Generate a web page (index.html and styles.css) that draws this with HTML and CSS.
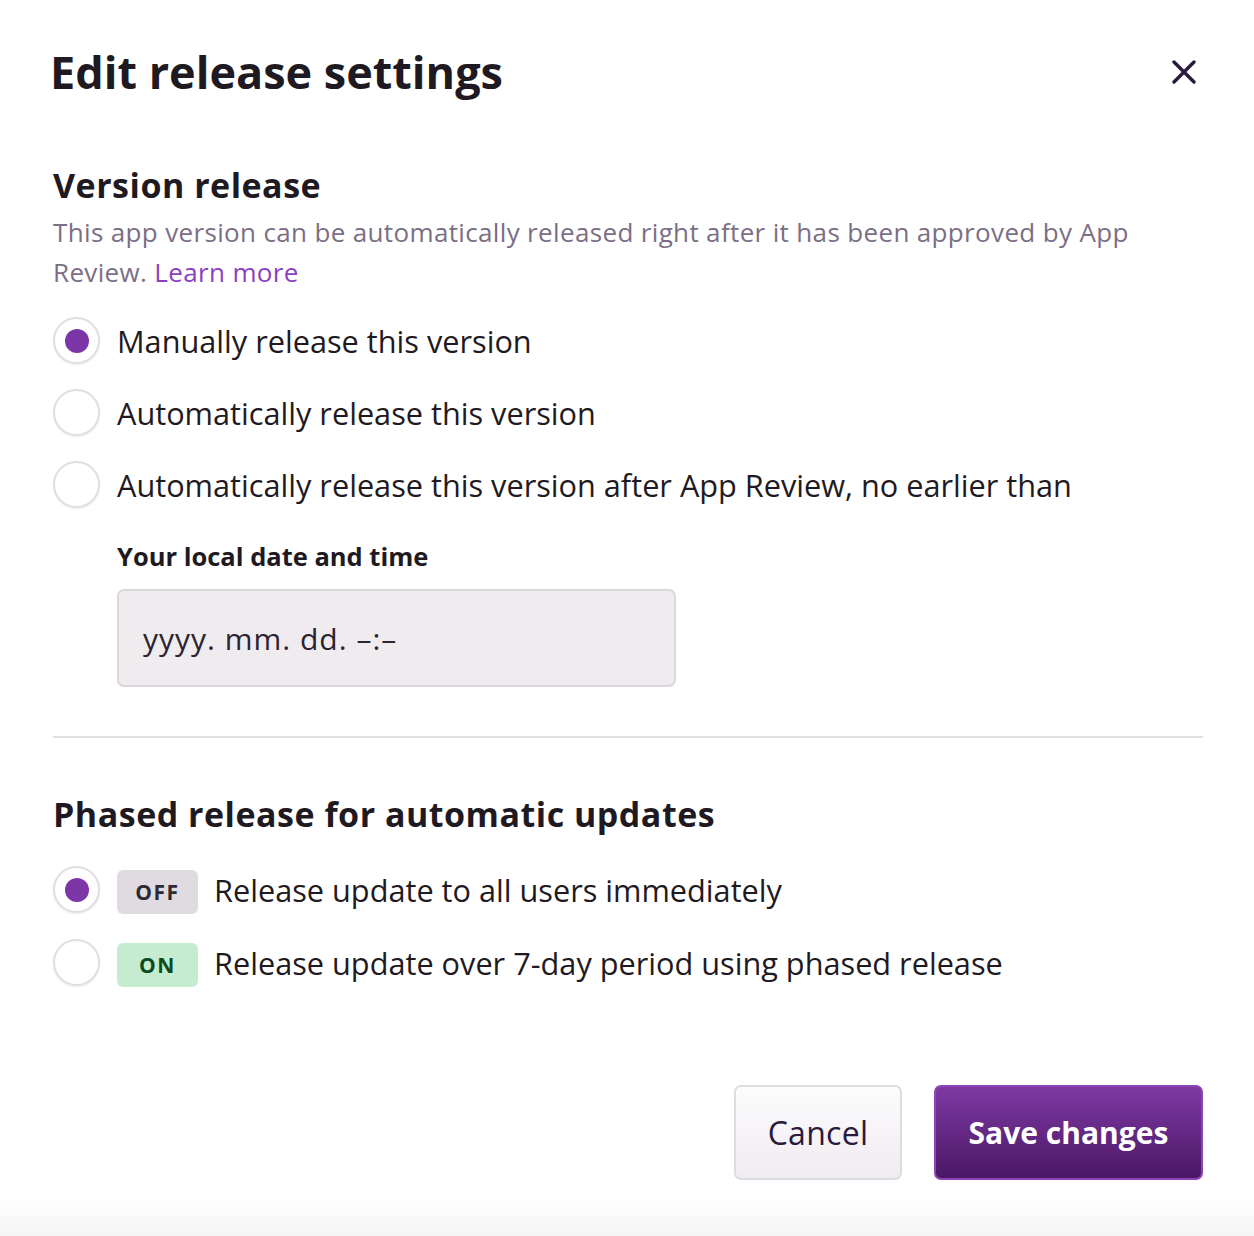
FILE: index.html
```html
<!DOCTYPE html>
<html>
<head>
<meta charset="utf-8">
<link rel="stylesheet" href="styles.css">
</head>
<body>
<div class="dialog">
  <header class="head">
    <h1 class="title">Edit release settings</h1>
    <button class="close" aria-label="Close">
      <svg width="24" height="24" viewBox="0 0 24 24"><path d="M2 2L22 22M22 2L2 22" stroke="#2b1a3d" stroke-width="3.4" stroke-linecap="round"/></svg>
    </button>
  </header>

  <section class="section">
    <h2 class="h2">Version release</h2>
    <p class="desc">This app version can be automatically released right after it has been approved by App Review. <a class="link" href="#">Learn more</a></p>
    <div class="options">
      <label class="opt"><span class="radio on"></span><span class="opt-text">Manually release this version</span></label>
      <label class="opt"><span class="radio"></span><span class="opt-text">Automatically release this version</span></label>
      <label class="opt"><span class="radio"></span><span class="opt-text">Automatically release this version after App Review, no earlier than</span></label>
    </div>
    <div class="datefield">
      <div class="field-label">Your local date and time</div>
      <div class="input">yyyy. mm. dd. –:–</div>
    </div>
  </section>

  <hr class="divider">

  <section class="section phased">
    <h2 class="h2">Phased release for automatic updates</h2>
    <div class="options2">
      <label class="opt2"><span class="radio on"></span><span class="badge off">OFF</span><span class="opt-text">Release update to all users immediately</span></label>
      <label class="opt2"><span class="radio"></span><span class="badge onb">ON</span><span class="opt-text">Release update over 7-day period using phased release</span></label>
    </div>
  </section>

  <footer class="foot">
    <button class="btn cancel">Cancel</button>
    <button class="btn save">Save changes</button>
  </footer>
</div>
<div class="fade"></div>
</body>
</html>
```

FILE: styles.css
```css
* { box-sizing: border-box; }
html, body { margin: 0; padding: 0; background: #fff; }
body {
  font-family: "Open Sans", Lato, sans-serif;
  color: #1f1a22;
  width: 1254px;
  height: 1236px;
  overflow: hidden;
  position: relative;
}
.dialog {
  padding: 0 51px 0 53px;
}
.head {
  display: flex;
  justify-content: space-between;
  align-items: center;
  height: 146px;
  padding-bottom: 2px;
}
.title {
  margin: 0 0 0 -3px;
  font-size: 45px;
  line-height: 56px;
  font-weight: 700;
  color: #1f1a22;
}
.close {
  border: 0;
  background: none;
  padding: 0;
  margin-right: 7px;
  width: 24px;
  height: 24px;
  display: flex;
}
.h2 {
  margin: 0;
  font-size: 34px;
  font-weight: 700;
  letter-spacing: 0.5px;
  line-height: 40px;
  color: #1f1a22;
}
.section:first-of-type .h2 { margin-top: 19px; }
.desc {
  margin: 7px 0 0;
  font-size: 26px;
  letter-spacing: 0.35px;
  line-height: 40px;
  color: #7b6e85;
}
.link { color: #8b3fc2; text-decoration: none; }
.options {
  margin-top: 25px;
  display: flex;
  flex-direction: column;
  gap: 25px;
}
.opt {
  display: flex;
  align-items: center;
  gap: 17px;
  height: 47px;
}
.radio {
  width: 47px;
  height: 47px;
  border-radius: 50%;
  border: 2px solid #e2dde3;
  background: #fff;
  box-shadow: 0 1px 2px rgba(0,0,0,0.08);
  display: flex;
  align-items: center;
  justify-content: center;
  flex: none;
}
.radio.on::after {
  content: "";
  width: 24px;
  height: 24px;
  border-radius: 50%;
  background: #7c36a8;
}
.opt-text {
  font-size: 30.7px;
  color: #1f1a22;
}
.datefield {
  margin: 33px 0 0 64px;
}
.field-label {
  font-size: 25.5px;
  font-weight: 700;
  line-height: 30px;
}
.input {
  margin-top: 18px;
  width: 559px;
  height: 98px;
  background: #efebef;
  border: 2px solid #dcd7dd;
  border-radius: 7px;
  padding: 0 24px;
  display: flex;
  align-items: center;
  font-size: 30px;
  letter-spacing: 1px;
  color: #2a2430;
}
.divider {
  margin: 49px 0 0;
  border: 0;
  border-top: 2px solid #e3e0e4;
}
.phased { margin-top: 56px; }
.options2 {
  margin-top: 32px;
  display: flex;
  flex-direction: column;
  gap: 26px;
}
.opt2 {
  display: flex;
  align-items: center;
  height: 47px;
}
.opt2 .radio { margin-right: 17px; }
.badge {
  width: 81px;
  height: 44px;
  border-radius: 6px;
  display: flex;
  align-items: center;
  justify-content: center;
  font-size: 21px;
  font-weight: 700;
  letter-spacing: 1.5px;
  margin: 5px 16px 0 0;
  flex: none;
}
.badge.off { background: #e0dbe1; color: #2e2a32; }
.badge.onb { background: #c5ecd1; color: #0c4a1f; }
.foot {
  margin-top: 99px;
  display: flex;
  justify-content: flex-end;
  gap: 32px;
}
.btn {
  height: 95px;
  border-radius: 7px;
  font-family: "Open Sans", Lato, sans-serif;
  padding: 0;
}
.cancel {
  width: 168px;
  background: linear-gradient(#fdfcfd, #efecf0);
  border: 2px solid #e0dbe2;
  color: #2b1a3d;
  font-size: 32px;
  letter-spacing: 0.3px;
}
.save {
  width: 269px;
  background: linear-gradient(#7d3aa3, #4b1765);
  border: 2px solid #8b45b5;
  color: #fff;
  font-weight: 700;
  font-size: 30px;
}
.fade {
  position: absolute;
  left: 0; right: 0; bottom: 0;
  height: 40px;
  background: linear-gradient(rgba(245,245,245,0), #f5f5f5);
}
```
